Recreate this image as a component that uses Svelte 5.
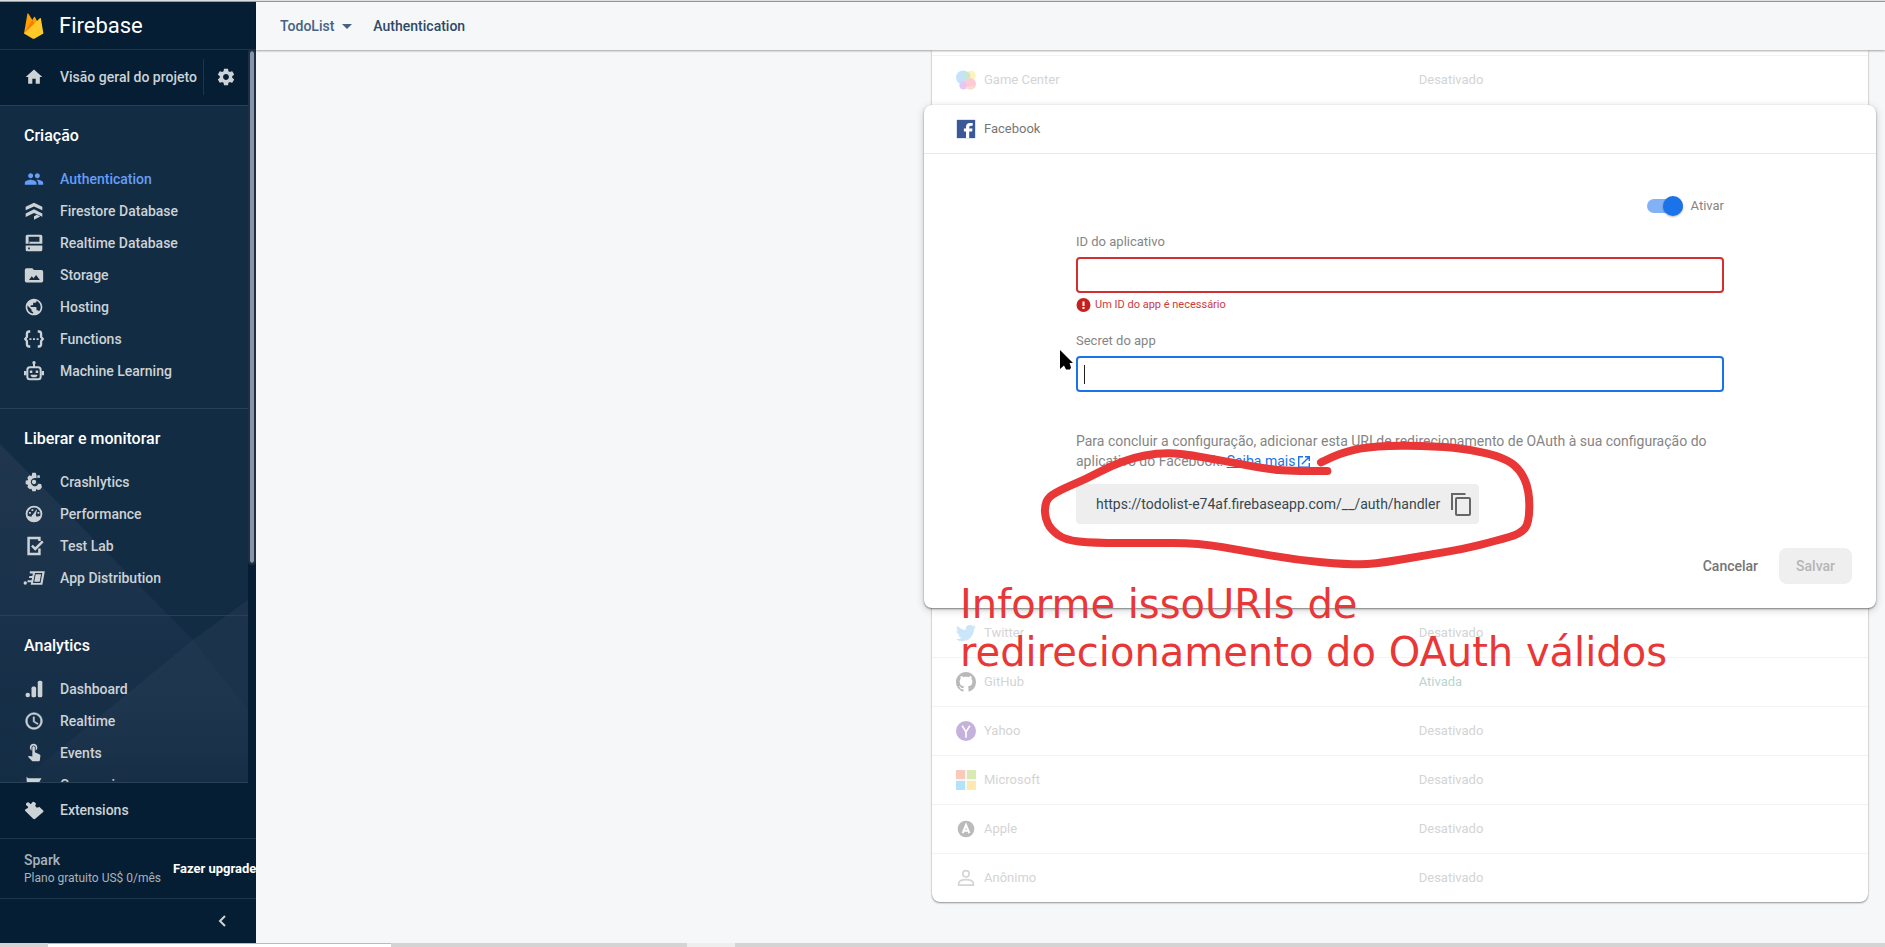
<script>
  const sections = [
    {
      title: 'Criação',
      items: [
        ['people', 'Authentication'],
        ['firestore', 'Firestore Database'],
        ['database', 'Realtime Database'],
        ['storage', 'Storage'],
        ['globe', 'Hosting'],
        ['functions', 'Functions'],
        ['robot', 'Machine Learning']
      ]
    },
    {
      title: 'Liberar e monitorar',
      items: [
        ['crash', 'Crashlytics'],
        ['gauge', 'Performance'],
        ['lab', 'Test Lab'],
        ['distribution', 'App Distribution']
      ]
    },
    {
      title: 'Analytics',
      items: [
        ['bars', 'Dashboard'],
        ['clock', 'Realtime'],
        ['touch', 'Events'],
        ['flag', 'Conversions']
      ]
    }
  ];

  const providers = [
    ['twitter', 'Twitter', 'Desativado'],
    ['github', 'GitHub', 'Ativada'],
    ['yahoo', 'Yahoo', 'Desativado'],
    ['microsoft', 'Microsoft', 'Desativado'],
    ['apple', 'Apple', 'Desativado'],
    ['anon', 'Anônimo', 'Desativado']
  ];

  const marker = [
    [892, 213], [770, 213], [700, 205], [590, 184], [450, 160], [380, 160], [310, 173], [240, 199],
    [170, 236], [100, 266], [55, 290], [44, 320], [46, 355], [62, 388], [104, 420], [190, 429],
    [350, 429], [505, 429], [650, 454], [800, 480], [950, 493], [1030, 493], [1180, 467],
    [1300, 447], [1400, 422], [1475, 400], [1498, 365], [1498, 270], [1470, 208], [1420, 172],
    [1320, 148], [1220, 138], [1040, 136], [940, 156], [873, 187]
  ];

  // Joins the points with quadratic curves through their midpoints.
  function smooth(points) {
    let d = `M${points[0].join(' ')}`;
    for (let i = 1; i < points.length - 1; i++) {
      const [x, y] = points[i];
      const [nx, ny] = points[i + 1];
      d += `Q${x} ${y} ${(x + nx) / 2} ${(y + ny) / 2}`;
    }
    return d + `L${points[points.length - 1].join(' ')}`;
  }
</script>

{#snippet icon(name)}
  <svg class="icon" viewBox="0 0 24 24" aria-hidden="true">
    {#if name === 'home'}
      <path d="M10 20v-6h4v6h5v-8h3L12 3 2 12h3v8z" />
    {:else if name === 'settings'}
      <path d="M19.43 12.98c.04-.32.07-.64.07-.98s-.03-.66-.07-.98l2.11-1.65c.19-.15.24-.42.12-.64l-2-3.46c-.12-.22-.39-.3-.61-.22l-2.49 1c-.52-.4-1.08-.73-1.69-.98l-.38-2.65C14.46 2.18 14.25 2 14 2h-4c-.25 0-.46.18-.49.42l-.38 2.65c-.61.25-1.17.59-1.69.98l-2.49-1c-.23-.09-.49 0-.61.22l-2 3.46c-.13.22-.07.49.12.64l2.11 1.65c-.04.32-.07.65-.07.98s.03.66.07.98l-2.11 1.65c-.19.15-.24.42-.12.64l2 3.46c.12.22.39.3.61.22l2.49-1c.52.4 1.08.73 1.69.98l.38 2.65c.03.24.24.42.49.42h4c.25 0 .46-.18.49-.42l.38-2.65c.61-.25 1.17-.59 1.69-.98l2.49 1c.23.09.49 0 .61-.22l2-3.46c.12-.22.07-.49-.12-.64l-2.11-1.65zM12 15.5c-1.93 0-3.5-1.57-3.5-3.5s1.57-3.5 3.5-3.5 3.5 1.57 3.5 3.5-1.57 3.5-3.5 3.5z" />
    {:else if name === 'people'}
      <path d="M16 11c1.66 0 3-1.34 3-3s-1.34-3-3-3-3 1.34-3 3 1.34 3 3 3zm-8 0c1.66 0 3-1.34 3-3S9.66 5 8 5 5 6.34 5 8s1.34 3 3 3zm0 2c-2.33 0-7 1.17-7 3.5V19h14v-2.5c0-2.33-4.67-3.5-7-3.5zm8 0c-.29 0-.62.02-.97.05 1.16.84 1.97 1.97 1.97 3.45V19h6v-2.5c0-2.33-4.67-3.5-7-3.5z" />
    {:else if name === 'firestore'}
      <path d="M12 2l10 5v4.200l-10-4.700-10 4.700V7zM12 10l10 5v4l-4-1.900-6-2.700-10 4.700V15zM12 18.200l3.500-1.600 4 2-7.500 3.800z" />
    {:else if name === 'database'}
      <path fill-rule="evenodd" d="M4 2h16a2 2 0 012 2v9H2V4a2 2 0 012-2zm1.500 2.500v6h13v-6zM2 15h20v5a2 2 0 01-2 2H4a2 2 0 01-2-2zm3 2.500v2h2v-2zM5 11.300v1h2v-1z" />
    {:else if name === 'storage'}
      <path fill-rule="evenodd" d="M10 4l2 2h9a2 2 0 012 2v11a2 2 0 01-2 2H3a2 2 0 01-2-2V6a2 2 0 012-2zM6 18h13l-4.500-6-3 4-2.200-2.500z" />
    {:else if name === 'globe'}
      <path d="M12 2C6.480 2 2 6.480 2 12s4.480 10 10 10 10-4.480 10-10S17.520 2 12 2zm-1 17.930c-3.950-.49-7-3.850-7-7.930 0-.62.080-1.210.21-1.790L9 15v1c0 1.100.9 2 2 2v1.930zm6.900-2.540c-.26-.81-1-1.390-1.900-1.390h-1v-3c0-.55-.45-1-1-1H8v-2h2c.55 0 1-.45 1-1V7h2c1.100 0 2-.9 2-2v-.41c2.930 1.190 5 4.060 5 7.410 0 2.080-.8 3.970-2.100 5.390z" />
    {:else if name === 'functions'}
      <path fill="none" stroke="currentColor" stroke-width="2.800" d="M7.500 3H6Q3.500 3 3.500 6v3.500L1.500 12l2 2.500V18q0 3 2.500 3h1.500M16.500 3H18q2.500 0 2.500 3v3.500l2 2.500-2 2.500V18q0 3-2.500 3h-1.500" />
      <path d="M6.500 11h2.400v2.200H6.500zM10.800 11h2.400v2.200h-2.400zM15.100 11h2.400v2.200h-2.400z" />
    {:else if name === 'robot'}
      <path fill="none" stroke="currentColor" stroke-width="2.400" d="M7 7.500h10q3 0 3 3V19q0 3-3 3H7q-3 0-3-3v-8.500q0-3 3-3zM12 7V3" />
      <path d="M12 0a2 2 0 110 4 2 2 0 010-4zM0 12h3v5H0zM21 12h3v5h-3zM7 11.500h3v3H7zM14 11.500h3v3h-3zM8 16.500h8v1.500l-2 1.600h-4L8 18z" />
    {:else if name === 'crash'}
      <path fill-rule="evenodd" d="M10 1h4l1 3v3.500a5 5 0 10.500 9l2-2.500 3 .5 1 3.500-2 3-3 .5-1.500-1.500-1 3h-4l-1-3-2 .8-3-2.800 1-2.500-3-1v-4l3-1L4 7l2.500-3L9 5z" />
      <circle cx="12" cy="12" r="2.600" />
      <path d="M16 4h3v3h-3z" />
    {:else if name === 'gauge'}
      <path fill-rule="evenodd" d="M12 2a10 10 0 110 20 10 10 0 010-20zm0 2.300a7.700 7.700 0 00-7.300 10.200L9 15.300q.2-2 2-2.900L15 6.500l.6.300L14 13.300q1 .8 1 2l4.300-.8A7.700 7.700 0 0012 4.300z" />
      <path d="M6 9.500h2.200v2.200H6zM9 6.300h2.200v2.200H9zM16.200 9.500h2.200v2.200h-2.200z" />
    {:else if name === 'lab'}
      <path fill="none" stroke="currentColor" stroke-width="3" d="M18.500 6V2.500H5.500v19h13V15" />
      <path fill="none" stroke="currentColor" stroke-width="3" d="M9.500 11.500l4 4L22.500 6.500" />
    {:else if name === 'distribution'}
      <path fill-rule="evenodd" d="M7 4h18l-3 16H8l.6-3H4l.5-2.300h4.600L9.600 12H6l.5-2.300h3.500l.6-3H7zm6.200 2L10.800 18h9l2.200-12z" />
      <path d="M14 7.500h6.500L18.800 16.500h-6.500zM1.500 16a2 2 0 110 4 2 2 0 010-4z" />
    {:else if name === 'bars'}
      <rect x="16.500" y="2" width="5.500" height="20" rx="2" /><rect x="9" y="9" width="5.500" height="13" rx="2" /><circle cx="4.500" cy="19.300" r="2.700" />
    {:else if name === 'clock'}
      <path d="M11.990 2C6.470 2 2 6.480 2 12s4.470 10 9.990 10C17.520 22 22 17.520 22 12S17.520 2 11.990 2zM12 20c-4.420 0-8-3.580-8-8s3.580-8 8-8 8 3.580 8 8-3.580 8-8 8zm.5-13H11v6l5.250 3.150.75-1.230-4.500-2.670z" stroke="currentColor" stroke-width=".6" />
    {:else if name === 'touch'}
      <path d="M9 11.240V7.500a2.500 2.500 0 015 0v3.740c1.210-.81 2-2.180 2-3.740C16 5.010 13.990 3 11.500 3S7 5.010 7 7.500c0 1.560.79 2.930 2 3.740zm9.840 4.630l-4.540-2.260c-.17-.07-.35-.11-.54-.11H13v-6c0-.83-.67-1.500-1.500-1.500S10 6.670 10 7.500v10.740l-3.430-.72c-.08-.01-.15-.03-.24-.03-.31 0-.59.13-.79.33l-.79.8 4.940 4.940c.27.27.65.44 1.060.44h6.790c.75 0 1.330-.55 1.440-1.280l.75-5.270c.01-.07.020-.14.020-.2 0-.62-.38-1.160-.91-1.380z" transform="translate(0 -2)" />
    {:else if name === 'flag'}
      <path d="M3 2l2 2h16l-3 5 3 6H7v7H4z" />
    {:else if name === 'extension'}
      <path d="M11 22.500L1.300 13Q.6 11.800 1.800 11l2.800-1.300Q5.800 8.500 4.200 7.500L2.400 6Q1.800 4.200 3.400 3.200 5 2.300 6.500 3.600L8 5 10.300 2.500Q11.500 1.600 12.700 2.600L14.500 4.400Q12.600 6.500 14.300 8.300 16.300 9.900 18.200 8l4.900 4.600Q23.800 13.500 23 14.400L13.500 22.500Q12.200 23.500 11 22.500z" />
    {/if}
  </svg>
{/snippet}

{#snippet brand(name)}
  <svg class="brand" viewBox="0 0 24 24" aria-hidden="true">
    {#if name === 'game'}
      <circle cx="8.500" cy="9" r="8.500" fill="#42a0f5" />
      <circle cx="18" cy="6.500" r="5.700" fill="#ffd814" />
      <path d="M13 1.700a5.700 5.700 0 013.500 8.500h-6q-3-4 2.500-8.500z" fill="#4fb860" />
      <circle cx="9" cy="18.500" r="5" fill="#a04ff0" />
      <circle cx="17" cy="16.500" r="7" fill="#f7557b" />
      <path d="M11 19.500h12.500a7 7 0 01-12.500 0z" fill="#fb8a55" />
      <path d="M10.200 15a7 7 0 00.5 5 5 5 0 003.300-1z" fill="#c23ac4" />
    {:else if name === 'facebook'}
      <path fill="#3b5998" d="M1 1h22v22H1z" />
      <path fill="#fff" d="M12 23v-8H9.500v-3.500H12V9.500Q12 4.700 16.800 4.700H20v3.500h-2q-2.200 0-2.200 1.900v1.400h4L19.300 15h-3.500v8z" />
    {:else if name === 'twitter'}
      <path fill="#55acee" d="M23.950 4.570a10 10 0 01-2.820.77 4.960 4.960 0 002.160-2.720 9.900 9.900 0 01-3.120 1.190 4.920 4.920 0 00-8.390 4.480A13.930 13.930 0 011.640 3.160a4.920 4.920 0 001.520 6.570 4.900 4.900 0 01-2.230-.61v.06a4.920 4.920 0 003.950 4.830 5 5 0 01-2.210.08 4.940 4.940 0 004.600 3.420A9.870 9.870 0 010 19.540a13.990 13.990 0 007.550 2.210c9.050 0 14-7.500 14-13.980 0-.21 0-.42-.02-.63a9.940 9.940 0 002.460-2.550z" />
    {:else if name === 'github'}
      <path fill="#1b1b1b" transform="scale(1.500)" fill-rule="evenodd" d="M8 0C3.580 0 0 3.580 0 8c0 3.540 2.290 6.530 5.470 7.590.4.070.55-.17.55-.38 0-.19-.01-.82-.01-1.490-2.010.37-2.530-.49-2.690-.94-.09-.23-.48-.94-.82-1.130-.28-.15-.68-.52-.01-.53.63-.01 1.080.58 1.230.82.72 1.210 1.870.87 2.330.66.07-.52.28-.87.51-1.070-1.780-.2-3.640-.89-3.640-3.950 0-.87.31-1.590.82-2.150-.08-.2-.36-1.020.08-2.120 0 0 .67-.21 2.200.82.64-.18 1.320-.27 2-.27s1.360.09 2 .27c1.530-1.040 2.200-.82 2.200-.82.44 1.100.16 1.920.08 2.120.51.56.82 1.270.82 2.150 0 3.070-1.870 3.750-3.650 3.950.29.25.54.73.54 1.480 0 1.070-.01 1.930-.01 2.200 0 .21.15.46.55.38A8.010 8.010 0 0016 8c0-4.420-3.580-8-8-8z" />
    {:else if name === 'yahoo'}
      <circle cx="12" cy="12" r="12" fill="#400090" />
      <path fill="none" stroke="#fff" stroke-width="2" d="M7.300 5.500L12 13l4.700-7.500M12 12.500V20" />
    {:else if name === 'microsoft'}
      <path fill="#f3f3f3" d="M0 0h24v24H0z" />
      <path fill="#f25022" d="M0 0h11v11H0z" /><path fill="#7fba00" d="M13 0h11v11H13z" />
      <path fill="#00a4ef" d="M0 13h11v11H0z" /><path fill="#ffb900" d="M13 13h11v11H13z" />
    {:else if name === 'apple'}
      <circle cx="12" cy="12" r="10" fill="#222" />
      <path fill="none" stroke="#fff" stroke-width="2.400" d="M8 17L12 7.200 16 17M9.500 14h5" />
    {:else if name === 'anon'}
      <path fill="none" stroke="#777" stroke-width="2" d="M12 3.200a3.800 3.800 0 110 7.600 3.800 3.800 0 010-7.600zM3.200 20.500V18q1-4 8.800-4t8.800 4v2.500z" />
    {/if}
  </svg>
{/snippet}

{#snippet row(id, name, status)}
  <tr>
    <td><span class="provider">{@render brand(id)}<span>{name}</span></span></td>
    <td class:enabled={status === 'Ativada'}>{status}</td>
  </tr>
{/snippet}

<div class="screen">
  <div class="top-edge"></div>
  <div class="app">
    <aside>
      <a class="logo" href="#home">
        <svg viewBox="0 0 20 26" aria-hidden="true">
          <path fill="#ffa000" d="M0 20.500L3.400.8q.4-1 1.100-.1L8.300 7 10 4q.5-.7 1 0l8 16z" />
          <path fill="#f57c00" d="M11.200 12.400L8.300 6.800 0 20.500z" />
          <path fill="#ffca28" d="M0 20.500L15.800 5.300q.8-.6 1.100.3L19.400 20.500 10.800 25.500q-1.200.6-2.400 0z" />
        </svg>
        <span>Firebase</span>
      </a>
      <div class="scroller">
        <div class="scroll-content">
          <div class="project">
            <a href="#overview">{@render icon('home')}<span>Visão geral do projeto</span></a>
            <button aria-label="Configurações">{@render icon('settings')}</button>
          </div>
          <nav>
            <svg class="facets" viewBox="0 0 248 677" preserveAspectRatio="none" aria-hidden="true">
              <defs>
                <linearGradient id="left" gradientUnits="userSpaceOnUse" x1="0" y1="340" x2="0" y2="677">
                  <stop offset="0" stop-color="#20364f" /><stop offset="1" stop-color="#132d45" />
                </linearGradient>
                <linearGradient id="right" gradientUnits="userSpaceOnUse" x1="0" y1="500" x2="0" y2="677">
                  <stop offset="0" stop-color="#20364f" /><stop offset=".5" stop-color="#1f364f" /><stop offset="1" stop-color="#162f46" />
                </linearGradient>
              </defs>
              <path fill="url(#left)" d="M0 339L193 535 40 650v27H0z" />
              <path fill="url(#left)" d="M193 535L248 603V677H0V640z" />
              <path fill="url(#right)" d="M248 495L193 535 20 677H248z" />
              <path fill="#132d45" opacity=".25" d="M193 535L248 605V495z" />
            </svg>
            {#each sections as section}
              <section>
                <h2>{section.title}</h2>
                {#each section.items as [id, label]}
                  <a class="item" class:active={label === 'Authentication'} href="#{id}">{@render icon(id)}<span>{label}</span></a>
                {/each}
              </section>
            {/each}
          </nav>
        </div>
        <div class="scrollbar"><div class="thumb"></div></div>
      </div>
      <a class="item extensions" href="#extensions">{@render icon('extension')}<span>Extensions</span></a>
      <div class="plan">
        <div><strong>Spark</strong><span>Plano gratuito US$ 0/mês</span></div>
        <button>Fazer upgrade</button>
      </div>
      <div class="collapse">
        <button aria-label="Recolher menu">
          <svg viewBox="0 0 8 12" aria-hidden="true"><path d="M7 1L2 6l5 5" fill="none" stroke="currentColor" stroke-width="2" /></svg>
        </button>
      </div>
    </aside>

    <main>
      <header>
        <button>TodoList <svg viewBox="0 0 10 5" aria-hidden="true"><path d="M0 0h10L5 5z" /></svg></button>
        <h1>Authentication</h1>
      </header>
      <div class="content">
        <div class="card">
          <table class="first">
            <tbody>{@render row('game', 'Game Center', 'Desativado')}</tbody>
          </table>

          <form class="panel" onsubmit={(e) => e.preventDefault()}>
            <div class="panel-head provider">{@render brand('facebook')}<span>Facebook</span></div>
            <div class="fields">
              <label class="toggle"><input type="checkbox" role="switch" checked /><span>Ativar</span></label>
              <label class="caption" for="app-id">ID do aplicativo</label>
              <input id="app-id" class="box invalid" type="text" />
              <p class="error">
                <svg viewBox="0 0 14 14" aria-hidden="true"><circle cx="7" cy="7" r="7" fill="#c5221f" /><path d="M6 3.500h2v4.500H6zM6 9h2v2H6z" fill="#fff" /></svg>
                <span>Um ID do app é necessário</span>
              </p>
              <label class="caption" for="app-secret">Secret do app</label>
              <input id="app-secret" class="box focused" type="text" />
              <p class="hint">
                Para concluir a configuração, adicionar esta URI de redirecionamento de OAuth à sua configuração do aplicativo do Facebook.
                <a href="#docs">Saiba mais<svg viewBox="0 0 14 14" aria-hidden="true"><path d="M6 1.700H1.700v10.600h10.600V8M8 1.700h4.300V6M12.300 1.700L4.800 9.200" fill="none" stroke="currentColor" stroke-width="1.400" /></svg></a>
              </p>
              <div class="uri">
                <span>https://todolist-e74af.firebaseapp.com/__/auth/handler</span>
                <button type="button" aria-label="Copiar">
                  <svg viewBox="0 0 20 23" aria-hidden="true"><path d="M1 17V1h13.500M5.500 5H18q1 0 1 1v15q0 1-1 1H6q-1 0-1-1V6q0-1 1-1z" fill="none" stroke="#666" stroke-width="2" /></svg>
                </button>
              </div>
            </div>
            <div class="actions">
              <button type="button">Cancelar</button>
              <button class="save" type="submit" disabled>Salvar</button>
            </div>
            <svg class="marker" viewBox="0 0 1560 540" aria-hidden="true">
              <path d={smooth(marker)} fill="none" stroke="#e93636" stroke-width="24" stroke-linecap="round" stroke-linejoin="round" />
            </svg>
            <svg class="pointer" viewBox="0 0 13 20" aria-hidden="true"><path d="M0 0l13 13H9.500l1.500 4.500-1 2H6l-2-4L0 19z" /></svg>
            <p class="note">Informe issoURIs de<br />redirecionamento do OAuth válidos</p>
          </form>

          <table>
            <tbody>
              {#each providers as [id, name, status]}
                {@render row(id, name, status)}
              {/each}
            </tbody>
          </table>
        </div>
      </div>
    </main>
  </div>
  <div class="taskbar"><div class="task open"></div><div class="task light"></div></div>
</div>

<style>
  :global(body) { margin: 0; }
  * { box-sizing: border-box; }
  .screen {
    height: 100vh;
    display: flex;
    flex-direction: column;
    overflow: hidden;
    font: 400 14px/20px Roboto, sans-serif;
    background: #f5f7f9;
  }
  .top-edge { flex: none; height: 2px; background: #dedede; border-bottom: 1px solid #999; }
  .app { flex: 1; min-height: 0; display: flex; }
  button { font: inherit; border: 0; background: none; padding: 0; color: inherit; }
  a { color: inherit; text-decoration: none; }
  h1, h2, p { margin: 0; font: inherit; }

  aside {
    flex: none;
    width: 256px;
    display: flex;
    flex-direction: column;
    background: #051e34;
    color: #cdd2d6;
    font-weight: 500;
  }
  .logo {
    flex: none;
    height: 48px;
    padding: 0 24px;
    display: flex;
    align-items: center;
    gap: 15px;
    border-bottom: 1px solid #1e3549;
    color: #fff;
    font-size: 22px;
    font-weight: 400;
  }
  .logo svg { width: 20px; height: 26px; }
  .icon { flex: none; width: 20px; height: 20px; fill: currentColor; overflow: visible; }
  .scroller { flex: 1; min-height: 0; display: flex; }
  .scroll-content { flex: 1; min-width: 0; overflow: hidden; border-bottom: 1px solid #2a4155; }
  .project { height: 55px; padding: 0 0 2px 24px; display: flex; align-items: center; }
  .project a { flex: 1; display: flex; align-items: center; gap: 16px; white-space: nowrap; }
  .project button { width: 45px; height: 36px; display: flex; align-items: center; justify-content: center; border-left: 1px solid #1e3549; }
  .scrollbar { flex: none; width: 8px; padding: 1px 2px 0; background: #051e34; }
  .thumb { height: 70%; background: #8694ae; border-radius: 2px; outline: 2px solid #202f3f; }
  nav { position: relative; background: #122c43; }
  .facets { position: absolute; left: 0; top: 0; width: 100%; height: 677px; }
  section { position: relative; padding: 16px 0 21px; border-top: 1px solid #274257; }
  h2 { padding: 4px 24px 17px; font-size: 16px; font-weight: 500; color: #fff; }
  .item { height: 32px; padding: 0 24px; display: flex; align-items: center; gap: 16px; }
  .active { color: #669df6; }
  .extensions { flex: none; height: 55px; padding-bottom: 2px; }
  .plan {
    flex: none;
    height: 61px;
    padding-left: 24px;
    display: flex;
    align-items: center;
    gap: 12px;
    border: 1px solid #1e3549;
    border-width: 1px 0;
    white-space: nowrap;
    color: #a9b3bc;
  }
  .plan div { flex: none; display: flex; flex-direction: column; font-size: 12px; line-height: 18px; font-weight: 400; }
  .plan strong { font-size: 14px; font-weight: 500; }
  .plan button { flex: none; font-size: 13px; font-weight: 700; color: #fff; }
  .collapse { flex: none; height: 44px; padding-right: 30px; display: flex; align-items: center; justify-content: flex-end; }
  .collapse svg { display: block; width: 8px; height: 12px; }

  main { flex: 1; min-width: 0; display: flex; flex-direction: column; }
  header {
    position: relative;
    z-index: 1;
    flex: none;
    height: 48px;
    padding: 0 24px;
    display: flex;
    align-items: center;
    gap: 21px;
    font-weight: 500;
    background: #f5f7f9;
    box-shadow: 0 1px 2px rgba(0, 0, 0, .35);
    color: #2f4a66;
  }
  header button { display: flex; align-items: center; gap: 8px; color: #476282; }
  header svg { width: 10px; height: 5px; fill: currentColor; }
  h1 { font-weight: 500; }
  .content { flex: 1; min-height: 0; overflow: hidden; display: grid; grid-template-columns: 676fr 936fr; padding-right: 17px; }
  .card {
    grid-column: 2;
    align-self: start;
    background: #fff;
    border-radius: 0 0 8px 8px;
    box-shadow: 0 1px 2px rgba(0, 0, 0, .4), 0 0 1px rgba(0, 0, 0, .25);
    font-size: 13px;
  }
  table { width: 100%; table-layout: fixed; border-spacing: 0; color: #d4d4d4; }
  .first { padding-top: 5px; }
  td { height: 49px; padding: 0; border-top: 1px solid #f2f3f3; }
  table:not(.first) tr:first-child td { border-top: 0; }
  td:first-child { width: 52%; padding-left: 24px; }
  .enabled { color: #b8d4d2; }
  .provider { display: flex; align-items: center; gap: 8px; }
  .brand { flex: none; width: 20px; height: 20px; }
  td .brand { opacity: .3; }
  .panel {
    position: relative;
    margin: 1px -8px 0;
    background: #fff;
    border-radius: 8px;
    box-shadow: 0 1px 2px rgba(0, 0, 0, .45), 0 2px 8px rgba(0, 0, 0, .18);
    color: #858585;
  }
  .panel-head { height: 49px; padding-left: 32px; border-bottom: 1px solid #e8eaeb; color: #777; }
  .fields { padding: 42px 152px 0; display: flex; flex-direction: column; align-items: stretch; }
  .toggle { align-self: flex-end; display: flex; align-items: center; gap: 8px; margin-bottom: 16px; }
  .toggle input { appearance: none; position: relative; width: 36px; height: 14px; margin: 0; border-radius: 7px; background: #82b1f5; }
  .toggle input::before {
    content: '';
    position: absolute;
    right: 0;
    top: -3px;
    width: 20px;
    height: 20px;
    border-radius: 50%;
    background: #1a73e8;
    box-shadow: 0 1px 2px rgba(0, 0, 0, .3);
  }
  .caption { margin-bottom: 5px; }
  .box { height: 36px; padding: 0 8px; border: 2px solid; border-radius: 4px; outline: 0; font: inherit; color: #222; background: #fff; }
  .invalid { border-color: #d32f2f; }
  .focused { border-color: #1a73e8; background: linear-gradient(#222, #222) 6px center / 1px 19px no-repeat #fff; }
  .error { display: flex; align-items: center; gap: 4px; margin: 2px 0 16px; font-size: 11px; color: #d0393b; }
  .error svg { width: 15px; height: 14px; }
  .hint { margin: 39px 0 13px; font-size: 14px; }
  .hint a { color: #1a73e8; text-decoration: underline; }
  .hint svg { width: 14px; height: 14px; margin-left: 2px; vertical-align: -3px; }
  .uri { align-self: flex-start; height: 40px; padding: 0 8px 0 20px; display: flex; align-items: center; gap: 11px; border-radius: 4px; background: #eee; color: #37474f; font-size: 14px; }
  .uri svg { display: block; width: 20px; height: 23px; }
  .actions { padding: 24px; display: flex; justify-content: flex-end; gap: 4px; font-size: 14px; font-weight: 500; }
  .actions button { height: 36px; padding: 0 17px; border-radius: 8px; color: #757575; }
  .actions .save { background: #efefef; color: #b5b5b5; }
  .marker { position: absolute; left: 106px; top: 295px; width: 520px; height: 180px; pointer-events: none; }
  .pointer { position: absolute; left: 136px; top: 245px; width: 13px; height: 20px; }
  .note { position: absolute; left: 36px; top: 475px; font: 40px/48px "DejaVu Sans", sans-serif; color: #e93636; white-space: nowrap; }

  .taskbar { flex: none; height: 4px; display: flex; padding-left: 48px; gap: 296px; background: #d4d4d4; }
  .task { border-top: 1px solid #bbb; }
  .open { width: 343px; background: #fff; }
  .light { width: 48px; background: #eee; border: 0; }
</style>
